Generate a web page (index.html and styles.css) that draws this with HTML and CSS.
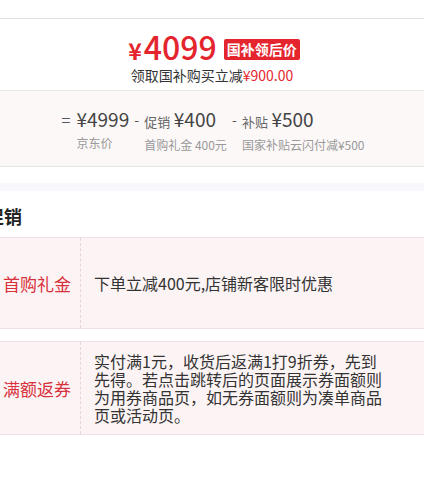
FILE: index.html
```html
<!DOCTYPE html>
<html lang="zh-CN">
<head>
    <meta charset="UTF-8">
    <meta name="viewport" content="width=device-width, initial-scale=1.0">
    <title>国补价格</title>
    <link rel="stylesheet" href="styles.css">
</head>
<body>
    <div class="topbar"></div>

    <div class="preco">
        <div class="preco-linha">
            <span class="preco-valor"><span class="yen">¥</span>4099</span>
            <span class="selo">国补领后价</span>
        </div>
        <div class="preco-sub">领取国补购买立减<span class="verm">¥900.00</span></div>
    </div>

    <div class="conta">
        <div class="item">
            <span class="op">=</span>
            <div class="col">
                <div class="topo"><span class="num">¥4999</span></div>
                <div class="rotulo">京东价</div>
            </div>
        </div>
        <div class="item">
            <span class="op">-</span>
            <div class="col">
                <div class="topo"><span class="tag">促销</span> <span class="num">¥400</span></div>
                <div class="rotulo">首购礼金 400元</div>
            </div>
        </div>
        <div class="item">
            <span class="op">-</span>
            <div class="col">
                <div class="topo"><span class="tag">补贴</span> <span class="num">¥500</span></div>
                <div class="rotulo">国家补贴云闪付减¥500</div>
            </div>
        </div>
    </div>

    <div class="faixa"></div>

    <div class="promo">
        <h2 class="promo-titulo">促销</h2>
        <div class="linha">
            <div class="nome">首购礼金</div>
            <div class="desc">下单立减400元,店铺新客限时优惠</div>
        </div>
        <div class="linha">
            <div class="nome">满额返券</div>
            <div class="desc">实付满1元，收货后返满1打9折券，先到先得。若点击跳转后的页面展示券面额则为用券商品页，如无券面额则为凑单商品页或活动页。</div>
        </div>
    </div>
</body>
</html>
```

FILE: styles.css
```css
body {
  margin: 0;
  background: white;
  font-family: "Noto Sans CJK SC", "Noto Sans", sans-serif;
  color: #333;
  overflow: hidden;
}

.topbar {
  height: 18px;
  border-bottom: 1px solid #e2e2e2;
}

.preco {
  height: 71px;
  border-bottom: 1px solid #ebebeb;
  display: flex;
  flex-direction: column;
  align-items: center;
}

.preco-linha {
  display: flex;
  align-items: center;
  margin-top: 11px;
  height: 36px;
  padding-left: 4px;
}

.preco-valor {
  color: #e4252e;
  font-size: 32px;
  font-weight: 500;
  line-height: 36px;
}

.yen {
  font-size: 23px;
  font-weight: 700;
  margin-right: 2px;
}

.selo {
  background: #e4252e;
  color: white;
  font-size: 14px;
  font-weight: 700;
  padding: 0 3px;
  height: 21px;
  line-height: 21px;
  margin-left: 7px;
  border-radius: 2px;
  margin-top: 2px;
}

.preco-sub {
  font-size: 14px;
  line-height: 18px;
}

.verm {
  color: #e4252e;
}

.conta {
  height: 76px;
  background: #fcf8f8;
  border-bottom: 1px solid #e6e6e6;
  display: flex;
  justify-content: center;
  align-items: flex-start;
  gap: 5px;
  padding-left: 2px;
  box-sizing: border-box;
  padding-top: 16px;
}

.item {
  display: flex;
}

.op {
  font-size: 16px;
  color: #555;
  line-height: 24px;
  width: 15px;
}

.item + .item .op {
  width: 10px;
  font-size: 14px;
}

.topo {
  line-height: 24px;
  white-space: nowrap;
}

.num {
  font-size: 19px;
  color: #444;
}

.tag {
  font-size: 13px;
  color: #666;
}

.rotulo {
  font-size: 12px;
  color: #999;
  line-height: 20px;
  margin-top: 1px;
  white-space: nowrap;
}

.faixa {
  height: 8px;
  margin-top: 16px;
  background: #f7f7fc;
}

.promo {
  margin-left: -14px;
}

.promo-titulo {
  font-size: 18px;
  font-weight: 700;
  color: #222;
  margin: 0;
  line-height: 24px;
  padding: 13px 0 9px 0;
}

.linha {
  display: flex;
  margin-left: 8px;
  background: #fcf4f4;
  border-top: 1px solid #f0e2e2;
  border-bottom: 1px solid #f0e2e2;
  min-height: 90px;
  margin-bottom: 12px;
}

.nome {
  width: 86px;
  flex-shrink: 0;
  border-right: 1px dashed #e8d4d8;
  display: flex;
  align-items: center;
  justify-content: center;
  font-size: 17px;
  color: #d8303c;
}

.desc {
  flex: 1;
  display: flex;
  align-items: center;
  padding: 10px 35px 10px 13px;
  font-size: 16px;
  line-height: 18px;
  color: #333;
}
```
